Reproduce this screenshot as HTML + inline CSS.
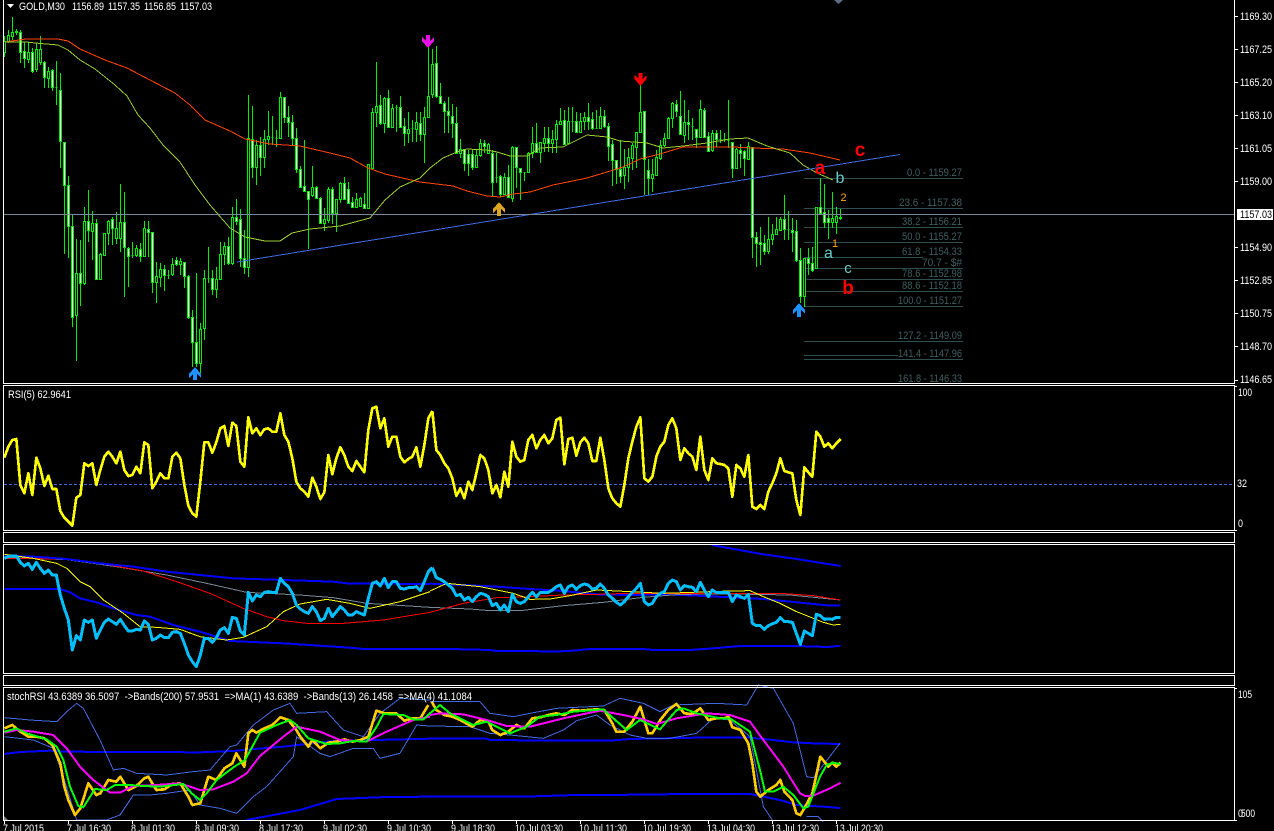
<!DOCTYPE html>
<html><head><meta charset="utf-8"><title>GOLD,M30</title>
<style>
html,body{margin:0;padding:0;background:#000;width:1274px;height:831px;overflow:hidden}
svg{display:block}
text{font-family:"Liberation Sans",sans-serif;font-size:11px;fill:#fff}
.f text{fill:#3f5f5f}
</style></head><body>
<svg width="1274" height="831" viewBox="0 0 1274 831" xmlns="http://www.w3.org/2000/svg">
<rect width="1274" height="831" fill="#000"/>

<!-- fibo lines -->
<g stroke="#2f4f4f" stroke-width="1" fill="none" shape-rendering="crispEdges">
<path d="M804 178.5H963M804 208.5H963M804 227.5H963M804 242.5H963M804 257.5H923M804 268.5H963M804 279.5H963M804 291.5H963M804 306.5H963M804 341.5H963M804 355.5H898M804 359.5H963"/>
</g>
<path d="M803 296L808 268L815 240L820 179" fill="none" stroke="#1a1a70" stroke-dasharray="2 2"/>

<!-- candles -->
<g shape-rendering="crispEdges" stroke="#00ee00" stroke-width="1">
<path fill="none" d="M4.5 36V57M8.5 30V43M12.5 17V40M16.5 29V35M20.5 30V63M24.5 42V68M28.5 42V63M32.5 48V73M36.5 43V72M40.5 36V65M44.5 61V88M48.5 67V88M52.5 69V91M56.5 61V105M60.5 73V168M64.5 142V254M68.5 176V258M72.5 215V327M76.5 239V361M80.5 240V306M84.5 207V285M88.5 190V242M92.5 211V260M96.5 219V279M100.5 253V279M104.5 233V256M108.5 220V245M112.5 217V245M116.5 212V244M120.5 184V252M124.5 192V297M128.5 247V287M132.5 242V258M136.5 245V257M140.5 243V262M144.5 221V257M148.5 221V257M152.5 232V293M156.5 262V303M160.5 263V287M164.5 265V291M168.5 270V279M172.5 258V276M176.5 257V266M180.5 258V275M184.5 262V288M188.5 275V319M192.5 310V367M196.5 273V367M200.5 323V373M204.5 270V340M208.5 247V283M212.5 270V295M216.5 267V298M220.5 242V280M224.5 242V265M228.5 237V265M232.5 207V265M236.5 199V225M240.5 209V267M244.5 230V274M248.5 95V277M252.5 106V178M256.5 140V185M260.5 137V176M264.5 130V168M268.5 111V145M272.5 116V145M276.5 130V147M280.5 92V139M284.5 97V123M288.5 106V137M292.5 115V146M296.5 128V173M300.5 166V188M304.5 140V192M308.5 191V249M312.5 166V197M316.5 186V199M320.5 197V224M324.5 208V231M328.5 187V223M332.5 187V224M336.5 199V232M340.5 182V203M344.5 177V200M348.5 182V204M352.5 197V207M356.5 193V207M360.5 197V207M364.5 193V209M368.5 164V209M372.5 108V168M376.5 62V127M380.5 95V125M384.5 97V133M388.5 90V128M392.5 104V128M396.5 105V132M400.5 96V127M404.5 118V146M408.5 112V143M412.5 120V142M416.5 112V142M420.5 112V141M424.5 107V163M428.5 43V117M432.5 49V98M436.5 46V98M440.5 83V104M444.5 101V133M448.5 97V133M452.5 104V138M456.5 107V153M460.5 139V158M464.5 149V171M468.5 150V176M472.5 150V170M476.5 150V168M480.5 139V157M484.5 140V153M488.5 143V153M492.5 150V197M496.5 153V183M500.5 175V197M504.5 173V195M508.5 165V198M512.5 146V202M516.5 147V188M520.5 168V200M524.5 172V181M528.5 152V173M532.5 127V158M536.5 123V153M540.5 142V163M544.5 127V152M548.5 127V152M552.5 130V153M556.5 120V153M560.5 108V125M564.5 110V145M568.5 107V144M572.5 107V132M576.5 112V133M580.5 113V133M584.5 112V130M588.5 103V130M592.5 112V130M596.5 110V129M600.5 107V129M604.5 110V128M608.5 123V161M612.5 140V186M616.5 160V184M620.5 140V183M624.5 149V189M628.5 148V182M632.5 143V170M636.5 132V168M640.5 83V133M644.5 111V195M648.5 159V195M652.5 159V192M656.5 150V176M660.5 140V160M664.5 133V147M668.5 117V139M672.5 102V128M676.5 100V117M680.5 91V135M684.5 100V143M688.5 110V140M692.5 118V140M696.5 129V148M700.5 100V138M704.5 108V138M708.5 132V152M712.5 130V152M716.5 130V147M720.5 130V143M724.5 133V142M728.5 100V148M732.5 142V178M736.5 148V169M740.5 144V168M744.5 150V176M748.5 142V160M752.5 147V258M756.5 232V267M760.5 227V265M764.5 235V255M768.5 217V254M772.5 224V245M776.5 217V235M780.5 217V231M784.5 195V240M788.5 211V240M792.5 218V252M796.5 220V262M800.5 248V303M804.5 258V307M808.5 248V275M812.5 247V272M816.5 207V269M820.5 178V213M824.5 184V228M828.5 210V239M832.5 192V228M836.5 207V234M840.5 209V220"/>
<path fill="#000" d="M3.5 41.5h2v11h-2zM7.5 35.5h2v6h-2zM11.5 32.5h2v4h-2zM27.5 52.5h2v7h-2zM35.5 49.5h2v20h-2zM39.5 49.5h2v13h-2zM47.5 71.5h2v7h-2zM75.5 273.5h2v42h-2zM83.5 221.5h2v62h-2zM91.5 223.5h2v8h-2zM99.5 254.5h2v25h-2zM103.5 233.5h2v22h-2zM107.5 221.5h2v12h-2zM115.5 228.5h2v10h-2zM119.5 222.5h2v16h-2zM135.5 248.5h2v7h-2zM143.5 228.5h2v28h-2zM155.5 276.5h2v6h-2zM159.5 269.5h2v8h-2zM171.5 264.5h2v10h-2zM179.5 261.5h2v3h-2zM199.5 329.5h2v34h-2zM203.5 278.5h2v50h-2zM215.5 279.5h2v10h-2zM219.5 254.5h2v25h-2zM223.5 246.5h2v8h-2zM231.5 217.5h2v46h-2zM247.5 138.5h2v129h-2zM255.5 145.5h2v22h-2zM263.5 139.5h2v18h-2zM267.5 136.5h2v3h-2zM279.5 97.5h2v41h-2zM311.5 187.5h2v8h-2zM323.5 219.5h2v4h-2zM327.5 189.5h2v31h-2zM335.5 199.5h2v14h-2zM339.5 183.5h2v16h-2zM355.5 199.5h2v8h-2zM359.5 198.5h2v8h-2zM367.5 164.5h2v44h-2zM371.5 112.5h2v56h-2zM375.5 106.5h2v6h-2zM383.5 98.5h2v25h-2zM391.5 108.5h2v19h-2zM407.5 129.5h2v4h-2zM415.5 122.5h2v7h-2zM423.5 117.5h2v17h-2zM427.5 96.5h2v21h-2zM431.5 64.5h2v30h-2zM459.5 149.5h2v4h-2zM475.5 155.5h2v12h-2zM479.5 143.5h2v12h-2zM487.5 144.5h2v9h-2zM503.5 177.5h2v17h-2zM511.5 147.5h2v51h-2zM527.5 153.5h2v19h-2zM531.5 143.5h2v10h-2zM539.5 142.5h2v10h-2zM543.5 138.5h2v5h-2zM551.5 139.5h2v4h-2zM555.5 124.5h2v15h-2zM559.5 121.5h2v3h-2zM567.5 121.5h2v22h-2zM579.5 121.5h2v11h-2zM583.5 117.5h2v4h-2zM599.5 116.5h2v12h-2zM623.5 167.5h2v8h-2zM627.5 157.5h2v10h-2zM631.5 145.5h2v13h-2zM635.5 132.5h2v15h-2zM639.5 112.5h2v20h-2zM651.5 174.5h2v4h-2zM655.5 157.5h2v18h-2zM659.5 145.5h2v13h-2zM663.5 138.5h2v7h-2zM667.5 118.5h2v20h-2zM671.5 103.5h2v15h-2zM683.5 122.5h2v13h-2zM699.5 109.5h2v28h-2zM711.5 133.5h2v17h-2zM735.5 149.5h2v19h-2zM747.5 146.5h2v13h-2zM767.5 239.5h2v12h-2zM771.5 234.5h2v5h-2zM775.5 229.5h2v5h-2zM779.5 219.5h2v11h-2zM803.5 258.5h2v38h-2zM815.5 207.5h2v61h-2zM831.5 218.5h2v4h-2zM835.5 216.5h2v6h-2zM839.5 217.5h2v1h-2zM55.5 87.5h2v0h-2zM131.5 255.5h2v0h-2zM167.5 275.5h2v0h-2zM207.5 278.5h2v0h-2zM271.5 137.5h2v0h-2zM275.5 138.5h2v0h-2zM395.5 107.5h2v0h-2zM411.5 128.5h2v0h-2zM495.5 177.5h2v0h-2zM523.5 172.5h2v0h-2zM571.5 121.5h2v0h-2zM595.5 128.5h2v0h-2zM691.5 126.5h2v0h-2zM719.5 139.5h2v0h-2zM723.5 139.5h2v0h-2zM727.5 140.5h2v0h-2zM787.5 229.5h2v0h-2z"/>
<path fill="#fff" d="M15.5 31.5h2v1h-2zM19.5 32.5h2v20h-2zM23.5 51.5h2v7h-2zM31.5 52.5h2v19h-2zM43.5 62.5h2v15h-2zM51.5 70.5h2v17h-2zM59.5 90.5h2v51h-2zM63.5 142.5h2v43h-2zM67.5 185.5h2v41h-2zM71.5 226.5h2v91h-2zM79.5 273.5h2v10h-2zM87.5 221.5h2v9h-2zM95.5 223.5h2v56h-2zM111.5 219.5h2v9h-2zM123.5 222.5h2v25h-2zM127.5 248.5h2v8h-2zM139.5 249.5h2v7h-2zM147.5 229.5h2v3h-2zM151.5 232.5h2v50h-2zM163.5 269.5h2v6h-2zM175.5 260.5h2v4h-2zM183.5 262.5h2v14h-2zM187.5 276.5h2v41h-2zM191.5 317.5h2v25h-2zM195.5 342.5h2v21h-2zM211.5 278.5h2v11h-2zM227.5 246.5h2v17h-2zM235.5 217.5h2v4h-2zM239.5 219.5h2v39h-2zM243.5 258.5h2v9h-2zM251.5 139.5h2v28h-2zM259.5 145.5h2v12h-2zM283.5 97.5h2v20h-2zM287.5 117.5h2v5h-2zM291.5 122.5h2v16h-2zM295.5 138.5h2v31h-2zM299.5 169.5h2v18h-2zM303.5 186.5h2v5h-2zM307.5 191.5h2v8h-2zM315.5 187.5h2v11h-2zM319.5 198.5h2v25h-2zM331.5 189.5h2v24h-2zM343.5 183.5h2v16h-2zM347.5 189.5h2v14h-2zM351.5 202.5h2v5h-2zM363.5 204.5h2v4h-2zM379.5 105.5h2v18h-2zM387.5 98.5h2v29h-2zM399.5 107.5h2v20h-2zM403.5 126.5h2v7h-2zM419.5 123.5h2v11h-2zM435.5 63.5h2v33h-2zM439.5 96.5h2v7h-2zM443.5 103.5h2v8h-2zM447.5 111.5h2v4h-2zM451.5 116.5h2v7h-2zM455.5 123.5h2v30h-2zM463.5 149.5h2v14h-2zM467.5 154.5h2v9h-2zM471.5 154.5h2v13h-2zM483.5 143.5h2v3h-2zM491.5 153.5h2v29h-2zM499.5 176.5h2v18h-2zM507.5 177.5h2v20h-2zM515.5 147.5h2v20h-2zM519.5 168.5h2v4h-2zM535.5 143.5h2v9h-2zM547.5 138.5h2v5h-2zM563.5 120.5h2v24h-2zM575.5 121.5h2v11h-2zM587.5 117.5h2v4h-2zM591.5 119.5h2v9h-2zM603.5 116.5h2v10h-2zM607.5 126.5h2v20h-2zM611.5 144.5h2v16h-2zM615.5 160.5h2v9h-2zM619.5 169.5h2v7h-2zM643.5 111.5h2v48h-2zM647.5 170.5h2v8h-2zM675.5 104.5h2v7h-2zM679.5 116.5h2v18h-2zM687.5 122.5h2v2h-2zM695.5 129.5h2v8h-2zM703.5 110.5h2v27h-2zM707.5 136.5h2v15h-2zM715.5 133.5h2v6h-2zM731.5 142.5h2v26h-2zM739.5 150.5h2v3h-2zM743.5 151.5h2v7h-2zM751.5 147.5h2v90h-2zM755.5 237.5h2v6h-2zM759.5 242.5h2v2h-2zM763.5 243.5h2v8h-2zM783.5 219.5h2v10h-2zM791.5 230.5h2v2h-2zM795.5 231.5h2v29h-2zM799.5 260.5h2v36h-2zM807.5 258.5h2v5h-2zM811.5 263.5h2v7h-2zM819.5 207.5h2v6h-2zM823.5 212.5h2v10h-2zM827.5 218.5h2v4h-2z"/>
</g>

<!-- MAs main -->
<g fill="none" stroke-width="1" shape-rendering="crispEdges">
<polyline stroke="#ff4500" points="5,42 26,39 58,39 68,41 80,49 105,60 127,68 150,80 175,93 190,105 205,120 230,131 245,139 270,144 300,146 330,153 350,158 368,168 385,174 420,182 453,186 467,191 487,196 500,197 513,194 530,192 553,185 587,178 607,172 623,167 640,159 660,154 683,147 703,147 733,147 753,148 783,149 810,153 840,160"/>
<polyline stroke="#9acd32" points="5,42 26,42 35,43 58,45 68,50 80,60 95,69 115,85 127,96 138,115 150,128 163,145 180,162 195,185 210,205 230,228 245,237 265,241 280,241 292,233 310,229 340,226 370,218 385,200 400,187 420,178 430,168 443,158 457,152 467,149 487,150 497,152 510,156 527,156 540,148 563,147 587,135 607,137 620,141 647,143 663,148 683,146 707,143 730,139 748,138 767,146 790,153 803,165 817,173 833,180"/>
<line x1="237" y1="262" x2="900" y2="154.5" stroke="#4169e1"/>
<line x1="3" y1="214.5" x2="1235" y2="214.5" stroke="#778899"/>
</g>

<!-- arrows -->
<g shape-rendering="crispEdges">
<path fill="#1e90ff" d="M195 367L201 374V378L197 374V380H193V374L189 378V374Z"/>
<path fill="#1e90ff" d="M799 303L805 310V314L801 310V317H797V310L793 314V310Z"/>
<path fill="#daa520" d="M499 202L505 209V213L501 209V216H497V209L493 213V209Z"/>
<path fill="#e810e8" d="M428 48L434 41V37L430 41V35H426V41L422 37V41Z"/>
<path fill="#ff0000" d="M640.5 86L646.5 79V75L642.5 79V73H638.5V79L634.5 75V79Z"/>
</g>
<polygon points="834,0 843,0 838.5,4" fill="#5a6e88"/>

<!-- wave labels -->
<g text-anchor="middle">
<text x="820" y="174" style="font-size:19px;font-weight:bold;fill:#f00">a</text>
<text x="860" y="156" style="font-size:19px;font-weight:bold;fill:#f00">c</text>
<text x="848" y="294" style="font-size:19px;font-weight:bold;fill:#f00">b</text>
<text x="840" y="183" style="font-size:16px;fill:#66cccc">b</text>
<text x="828.5" y="258" style="font-size:16px;fill:#66cccc">a</text>
<text x="848" y="273" style="font-size:15px;fill:#66cccc">c</text>
<text x="843.5" y="201" style="font-size:11px;fill:#ffa500">2</text>
<text x="835" y="247" style="font-size:11px;fill:#ffa500">1</text>
</g>

<!-- fibo text -->
<g class="f" text-anchor="end">
<text x="962" y="176" textLength="55" lengthAdjust="spacingAndGlyphs">0.0 - 1159.27</text>
<text x="962" y="206" textLength="63" lengthAdjust="spacingAndGlyphs">23.6  - 1157.38</text>
<text x="962" y="225" textLength="60" lengthAdjust="spacingAndGlyphs">38.2 - 1156.21</text>
<text x="962" y="240" textLength="60" lengthAdjust="spacingAndGlyphs">50.0 - 1155.27</text>
<text x="962" y="255" textLength="60" lengthAdjust="spacingAndGlyphs">61.8 - 1154.33</text>
<text x="962" y="266" textLength="40" lengthAdjust="spacingAndGlyphs">70.7 - $#</text>
<text x="962" y="277" textLength="60" lengthAdjust="spacingAndGlyphs">78.6 - 1152.98</text>
<text x="962" y="289" textLength="60" lengthAdjust="spacingAndGlyphs">88.6 - 1152.18</text>
<text x="962" y="304" textLength="64" lengthAdjust="spacingAndGlyphs">100.0 - 1151.27</text>
<text x="962" y="339" textLength="64" lengthAdjust="spacingAndGlyphs">127.2 - 1149.09</text>
<text x="962" y="357" textLength="64" lengthAdjust="spacingAndGlyphs">141.4 - 1147.96</text>
<text x="962" y="382" textLength="64" lengthAdjust="spacingAndGlyphs">161.8 - 1146.33</text>
</g>

<!-- RSI panel -->
<line x1="4" y1="484.5" x2="1234" y2="484.5" stroke="#4169e1" stroke-dasharray="3 2" shape-rendering="crispEdges"/>
<g transform="translate(0,385) scale(.33333)" fill="none" shape-rendering="crispEdges" stroke-linejoin="round">
<polyline stroke="#ffff00" stroke-width="8" points="13,218 25,185 37,165 49,162 61,300 73,325 85,265 97,330 109,218 121,250 133,303 145,272 157,312 169,312 181,378 193,398 205,410 217,422 229,338 241,330 253,235 265,243 277,235 289,300 301,255 313,215 325,200 337,215 349,235 361,200 373,255 385,273 397,270 409,245 421,265 433,172 445,180 457,310 469,290 481,265 493,280 505,280 517,215 529,203 541,220 553,300 565,362 577,385 589,395 601,290 613,172 625,172 637,203 649,172 661,130 673,123 685,183 697,113 709,123 721,230 733,245 745,97 757,145 769,130 781,150 793,133 805,130 817,140 829,140 841,85 853,150 865,170 877,220 889,290 901,310 913,320 925,335 937,278 949,305 961,342 973,322 985,210 997,268 1009,220 1021,187 1033,210 1045,245 1057,258 1069,228 1081,245 1093,262 1105,135 1117,70 1129,65 1141,130 1153,100 1165,185 1177,155 1189,155 1201,215 1213,232 1225,222 1237,215 1249,187 1261,245 1273,180 1285,100 1297,78"/>
<!-- panel 3 left -->
<polyline stroke="#0000ff" stroke-width="6" points="13,612 180,612 210,622 240,640 290,652 340,670 410,690 450,695 520,720 600,740 690,768 850,775 1050,788 1090,792 1290,792"/>
<polyline stroke="#778899" stroke-width="3" points="13,517 200,524 350,545 500,570 620,595 740,622 900,630 1000,638 1100,655 1290,667"/>
<polyline stroke="#ff0000" stroke-width="3" points="13,520 200,522 300,535 430,558 530,590 630,625 730,670 800,695 850,707 920,715 1030,715 1150,705 1290,682"/>
<polyline stroke="#0000ff" stroke-width="6" points="13,512 100,515 200,522 300,535 400,545 500,560 600,570 700,580 850,585 1000,590 1040,595 1290,597"/>
<polyline stroke="#ffff00" stroke-width="3" points="13,508 100,520 170,535 200,550 240,590 270,605 310,645 370,685 420,725 470,727 540,733 600,755 680,765 730,757 800,725 850,680 900,657 980,643 1050,655 1110,670 1200,650 1290,620"/>
<polyline stroke="#00bfff" stroke-width="9" points="13,520 25,515 37,513 49,513 61,532 73,543 85,535 97,553 109,532 121,550 133,565 145,555 157,570 169,570 181,630 193,670 205,705 217,795 229,752 241,765 253,705 265,712 277,705 289,760 301,735 313,712 325,702 337,710 349,718 361,703 373,722 385,738 397,738 409,733 421,735 433,708 445,718 457,765 469,760 481,750 493,758 505,758 517,742 529,740 541,745 553,775 565,810 577,830 589,845 601,810 613,760 625,760 637,772 649,758 661,735 673,728 685,745 697,697 709,700 721,738 733,750 745,622 757,648 769,630 781,635 793,622 805,620 817,622 829,622 841,580 853,595 865,605 877,625 889,660 901,672 913,680 925,685 937,665 949,680 961,707 973,700 985,670 997,695 1009,680 1021,665 1033,675 1045,690 1057,690 1069,680 1081,685 1093,690 1105,640 1117,595 1129,590 1141,603 1153,580 1165,608 1177,590 1189,590 1201,610 1213,612 1225,608 1237,608 1249,605 1261,617 1273,590 1285,560 1297,548"/>
</g>
<g transform="translate(430,385) scale(.33333)" fill="none" shape-rendering="crispEdges" stroke-linejoin="round">
<polyline stroke="#ffff00" stroke-width="8" points="7,78 19,195 31,210 43,235 55,250 67,280 79,333 91,310 103,340 115,290 127,315 139,265 151,210 163,220 175,255 187,325 199,300 211,337 223,260 235,305 247,170 259,215 271,230 283,225 295,165 307,150 319,190 331,165 343,150 355,175 367,160 379,105 391,98 403,238 415,162 427,158 439,212 451,172 463,158 475,175 487,228 499,228 511,158 523,225 535,310 547,340 559,355 571,365 583,300 595,220 607,170 619,125 631,97 643,280 655,290 667,275 679,215 691,185 703,170 715,120 727,100 739,130 751,225 763,190 775,205 787,215 799,255 811,155 823,255 835,285 847,220 859,235 871,237 883,240 895,250 907,335 919,240 931,250 943,275 955,210 967,365 979,372 991,360 1003,372 1015,320 1027,295 1039,265 1051,220 1063,258 1075,262 1087,265 1099,345 1111,390 1123,247 1135,262 1147,275 1159,140 1171,155 1183,185 1195,175 1207,190 1219,175 1232,162"/>
<polyline stroke="#0000ff" stroke-width="6" points="0,792 60,792 180,795 200,798 300,798 370,800 430,797 480,792 640,792 670,795 780,795 850,790 930,783 1100,783 1195,786 1232,782"/>
<polyline stroke="#0000ff" stroke-width="6" points="845,480 900,490 1000,508 1100,522 1200,538 1232,543"/>
<polyline stroke="#0000ff" stroke-width="6" points="0,596 100,600 200,605 300,612 400,618 500,628 600,630 700,628 800,632 900,637 1000,642 1100,652 1200,662 1232,662"/>
<polyline stroke="#778899" stroke-width="3" points="0,667 120,672 180,677 270,677 400,662 520,652 640,637 750,628 900,627 1080,630 1232,645"/>
<polyline stroke="#ff0000" stroke-width="3" points="0,682 100,655 200,638 300,635 400,630 500,628 600,625 700,625 800,625 900,625 1050,625 1150,632 1232,645"/>
<polyline stroke="#ffff00" stroke-width="3" points="0,618 50,595 150,605 250,625 300,643 360,642 420,632 500,615 600,620 700,625 900,618 960,617 1000,635 1050,655 1100,680 1180,712 1210,720 1232,718"/>
<polyline stroke="#00bfff" stroke-width="9" points="7,548 19,578 31,583 43,590 55,600 67,610 79,632 91,628 103,645 115,637 127,650 139,635 151,625 163,628 175,635 187,662 199,655 211,675 223,660 235,680 247,628 259,650 271,655 283,650 295,635 307,622 319,635 331,622 343,622 355,622 367,615 379,605 391,600 403,625 415,605 427,600 439,613 451,602 463,597 475,600 487,612 499,610 511,597 523,610 535,630 547,640 559,652 571,660 583,650 595,635 607,622 619,610 631,595 643,650 655,660 667,655 679,635 691,625 703,620 715,595 727,585 739,590 751,615 763,602 775,605 787,607 799,620 811,592 823,615 835,635 847,615 859,623 871,623 883,623 895,622 907,650 919,630 931,635 943,640 955,628 967,715 979,722 991,722 1003,733 1015,722 1027,716 1039,712 1051,698 1063,710 1075,710 1087,712 1099,745 1111,778 1123,738 1135,745 1147,752 1159,688 1171,692 1183,703 1195,702 1207,703 1219,697 1232,697"/>
</g>

<!-- stoch panel -->
<g transform="translate(0,680) scale(.33333)" fill="none" shape-rendering="crispEdges" stroke-linejoin="round">
<polyline stroke="#0000ff" stroke-width="6" points="13,222 60,216 150,212 200,215 600,217 700,213 750,208 850,200 1000,183 1290,176"/>
<polyline stroke="#0000ff" stroke-width="6" points="740,420 820,405 900,390 1010,357 1160,351 1290,350"/>
<polyline stroke="#4169e1" stroke-width="3" points="13,113 90,120 170,125 200,95 230,70 250,85 300,180 340,270 370,265 410,280 500,285 580,275 630,270 690,200 710,195 760,135 820,90 870,70 890,100 980,95 1030,150 1090,170 1140,100 1200,55 1290,60"/>
<polyline stroke="#4169e1" stroke-width="3" points="13,170 100,180 160,205 190,290 230,420 320,420 360,405 400,345 450,345 500,340 570,330 600,375 660,385 710,400 760,350 800,320 880,230 890,170 960,220 990,230 1060,205 1120,205 1140,235 1200,220 1250,135 1290,138"/>
<polyline stroke="#ffcc00" stroke-width="8" points="13,145 37,135 61,155 85,170 109,170 133,175 157,195 181,250 193,320 205,360 225,405 241,385 265,310 289,345 301,340 325,300 349,305 361,290 385,330 409,318 433,295 445,290 469,330 493,328 517,312 541,310 565,350 577,375 601,370 625,290 649,300 673,265 697,250 709,220 733,260 745,160 757,150 769,158 793,145 817,135 841,112 865,120 889,150 901,170 925,200 937,180 961,205 985,188 1009,185 1033,178 1057,185 1081,180 1105,170 1129,92 1153,100 1189,100 1213,122 1237,115 1261,115 1285,75"/>
<polyline stroke="#ff00ff" stroke-width="6" points="13,158 50,150 100,155 160,165 200,205 240,260 280,300 330,338 360,338 400,318 470,315 540,310 600,330 640,328 700,305 740,280 780,228 850,170 890,140 960,155 1020,180 1100,185 1160,155 1240,120 1290,110"/>
<polyline stroke="#00ff00" stroke-width="6" points="13,155 50,145 80,160 140,178 170,200 190,240 210,320 235,378 250,382 285,327 320,330 345,315 390,315 430,318 480,320 550,312 575,340 600,360 620,340 650,300 700,262 735,240 780,158 830,135 870,120 890,135 925,175 980,192 1020,190 1060,183 1100,185 1130,140 1150,102 1210,105 1240,118 1270,118 1290,100"/>
</g>
<g transform="translate(430,680) scale(.33333)" fill="none" shape-rendering="crispEdges" stroke-linejoin="round">
<polyline stroke="#0000ff" stroke-width="6" points="0,176 170,176 180,180 400,182 540,182 600,177 800,173 960,173 1030,180 1090,187 1150,190 1232,192"/>
<polyline stroke="#0000ff" stroke-width="6" points="0,350 280,350 440,345 650,344 750,342 960,342 1000,350 1050,360 1100,375 1180,380 1232,384"/>
<polyline stroke="#4169e1" stroke-width="3" points="0,65 150,65 180,100 250,110 300,100 380,85 520,78 570,55 640,70 690,95 730,75 860,70 950,75 985,15 1030,25 1090,130 1130,290 1150,293 1230,190"/>
<polyline stroke="#4169e1" stroke-width="3" points="0,138 120,140 180,160 240,165 340,175 400,150 440,122 500,105 540,135 600,165 650,175 720,175 800,160 850,115 900,120 960,170 1000,380 1030,425"/>
<polyline stroke="#4169e1" stroke-width="3" points="1130,410 1165,410 1180,425"/>
<polyline stroke="#ffcc00" stroke-width="8" points="5,65 19,90 43,105 67,110 91,120 127,140 151,120 175,125 187,150 211,165 235,155 259,135 283,145 307,115 331,112 355,105 379,100 403,105 427,90 451,92 475,90 499,88 523,90 547,130 559,155 583,155 607,125 631,80 655,160 667,160 691,120 715,90 739,72 763,100 787,102 811,85 835,120 859,115 883,115 895,110 907,142 931,150 955,190 967,250 979,335 991,350 1015,330 1039,315 1051,300 1063,335 1087,360 1099,400 1111,405 1123,385 1147,340 1171,230 1195,260 1207,248 1219,260 1232,248"/>
<polyline stroke="#ff00ff" stroke-width="6" points="0,105 30,100 100,103 170,120 230,138 300,140 400,115 510,92 580,105 640,118 680,132 740,115 800,105 830,100 900,105 960,125 1000,180 1060,260 1110,340 1125,348 1150,347 1200,325 1232,308"/>
<polyline stroke="#00ff00" stroke-width="6" points="0,100 30,75 60,100 130,135 170,125 240,160 290,140 330,110 380,105 430,95 520,88 550,115 590,150 630,120 690,148 740,90 760,85 800,100 870,115 900,115 960,155 990,270 1005,335 1030,335 1060,320 1090,345 1120,385 1135,380 1170,290 1190,255 1210,248 1232,252"/>
</g>
<polygon points="3,820 3,815 8,820" fill="#808080"/>

<!-- frames -->
<g fill="none" stroke="#fff" stroke-width="1" shape-rendering="crispEdges">
<path d="M3.5 -1V383.5H1234.5V-1"/>
<rect x="3.5" y="385.5" width="1231" height="145"/>
<rect x="3.5" y="532.5" width="1231" height="10"/>
<rect x="3.5" y="544.5" width="1231" height="129"/>
<rect x="3.5" y="675.5" width="1231" height="10"/>
<rect x="3.5" y="687.5" width="1231" height="133"/>
<path d="M1235 16.5h3M1235 49.5h3M1235 82.5h3M1235 115.5h3M1235 148.5h3M1235 181.5h3M1235 247.5h3M1235 280.5h3M1235 313.5h3M1235 346.5h3M1235 380.5h3M1235 386.5h2M1235 530.5h2M1235 688.5h2M1235 820.5h2"/>
<path d="M4.5 821v3M68.5 821v3M132.5 821v3M196.5 821v3M260.5 821v3M324.5 821v3M388.5 821v3M452.5 821v3M516.5 821v3M580.5 821v3M644.5 821v3M708.5 821v3M772.5 821v3M836.5 821v3"/>
</g>

<!-- header -->
<polygon points="7,4 14,4 10.5,8" fill="#fff"/>
<text x="19" y="10" textLength="46" lengthAdjust="spacingAndGlyphs">GOLD,M30</text>
<text x="72" y="10" textLength="32" lengthAdjust="spacingAndGlyphs">1156.89</text>
<text x="108" y="10" textLength="32" lengthAdjust="spacingAndGlyphs">1157.35</text>
<text x="144" y="10" textLength="32" lengthAdjust="spacingAndGlyphs">1156.85</text>
<text x="180" y="10" textLength="32" lengthAdjust="spacingAndGlyphs">1157.03</text>

<!-- price axis -->
<g>
<text x="1240" y="20" textLength="32" lengthAdjust="spacingAndGlyphs">1169.30</text>
<text x="1240" y="53" textLength="32" lengthAdjust="spacingAndGlyphs">1167.25</text>
<text x="1240" y="86" textLength="32" lengthAdjust="spacingAndGlyphs">1165.20</text>
<text x="1240" y="119" textLength="32" lengthAdjust="spacingAndGlyphs">1163.10</text>
<text x="1240" y="152" textLength="32" lengthAdjust="spacingAndGlyphs">1161.05</text>
<text x="1240" y="185" textLength="32" lengthAdjust="spacingAndGlyphs">1159.00</text>
<text x="1240" y="251" textLength="32" lengthAdjust="spacingAndGlyphs">1154.90</text>
<text x="1240" y="284" textLength="32" lengthAdjust="spacingAndGlyphs">1152.85</text>
<text x="1240" y="317" textLength="32" lengthAdjust="spacingAndGlyphs">1150.75</text>
<text x="1240" y="350" textLength="32" lengthAdjust="spacingAndGlyphs">1148.70</text>
<text x="1240" y="383" textLength="32" lengthAdjust="spacingAndGlyphs">1146.65</text>
</g>
<rect x="1237" y="209" width="36" height="11" fill="#fff" shape-rendering="crispEdges"/>
<text x="1240" y="218" textLength="32" lengthAdjust="spacingAndGlyphs" style="fill:#000">1157.03</text>

<text x="1238" y="396" textLength="14" lengthAdjust="spacingAndGlyphs">100</text>
<text x="1237" y="487" textLength="10" lengthAdjust="spacingAndGlyphs">32</text>
<text x="1238" y="527" textLength="5" lengthAdjust="spacingAndGlyphs">0</text>
<text x="1238" y="698" textLength="14" lengthAdjust="spacingAndGlyphs">105</text>
<text x="1238" y="817" textLength="5" lengthAdjust="spacingAndGlyphs">0</text>
<text x="1241" y="817" textLength="14" lengthAdjust="spacingAndGlyphs">500</text>

<text x="8" y="398" textLength="63" lengthAdjust="spacingAndGlyphs">RSI(5) 62.9641</text>
<text x="7" y="700" textLength="465" lengthAdjust="spacingAndGlyphs" xml:space="preserve">stochRSI 43.6389 36.5097  -&gt;Bands(200) 57.9531  =&gt;MA(1) 43.6389  -&gt;Bands(13) 26.1458  =&gt;MA(4) 41.1084</text>

<!-- time axis -->
<g>
<text x="3" y="832" textLength="41" lengthAdjust="spacingAndGlyphs">7 Jul 2015</text>
<text x="67" y="832" textLength="44" lengthAdjust="spacingAndGlyphs">7 Jul 16:30</text>
<text x="131" y="832" textLength="44" lengthAdjust="spacingAndGlyphs">8 Jul 01:30</text>
<text x="195" y="832" textLength="44" lengthAdjust="spacingAndGlyphs">8 Jul 09:30</text>
<text x="259" y="832" textLength="44" lengthAdjust="spacingAndGlyphs">8 Jul 17:30</text>
<text x="323" y="832" textLength="44" lengthAdjust="spacingAndGlyphs">9 Jul 02:30</text>
<text x="387" y="832" textLength="44" lengthAdjust="spacingAndGlyphs">9 Jul 10:30</text>
<text x="451" y="832" textLength="44" lengthAdjust="spacingAndGlyphs">9 Jul 18:30</text>
<text x="515" y="832" textLength="48" lengthAdjust="spacingAndGlyphs">10 Jul 03:30</text>
<text x="579" y="832" textLength="48" lengthAdjust="spacingAndGlyphs">10 Jul 11:30</text>
<text x="643" y="832" textLength="48" lengthAdjust="spacingAndGlyphs">10 Jul 19:30</text>
<text x="707" y="832" textLength="48" lengthAdjust="spacingAndGlyphs">13 Jul 04:30</text>
<text x="771" y="832" textLength="48" lengthAdjust="spacingAndGlyphs">13 Jul 12:30</text>
<text x="835" y="832" textLength="48" lengthAdjust="spacingAndGlyphs">13 Jul 20:30</text>
</g>
</svg>
</body></html>
